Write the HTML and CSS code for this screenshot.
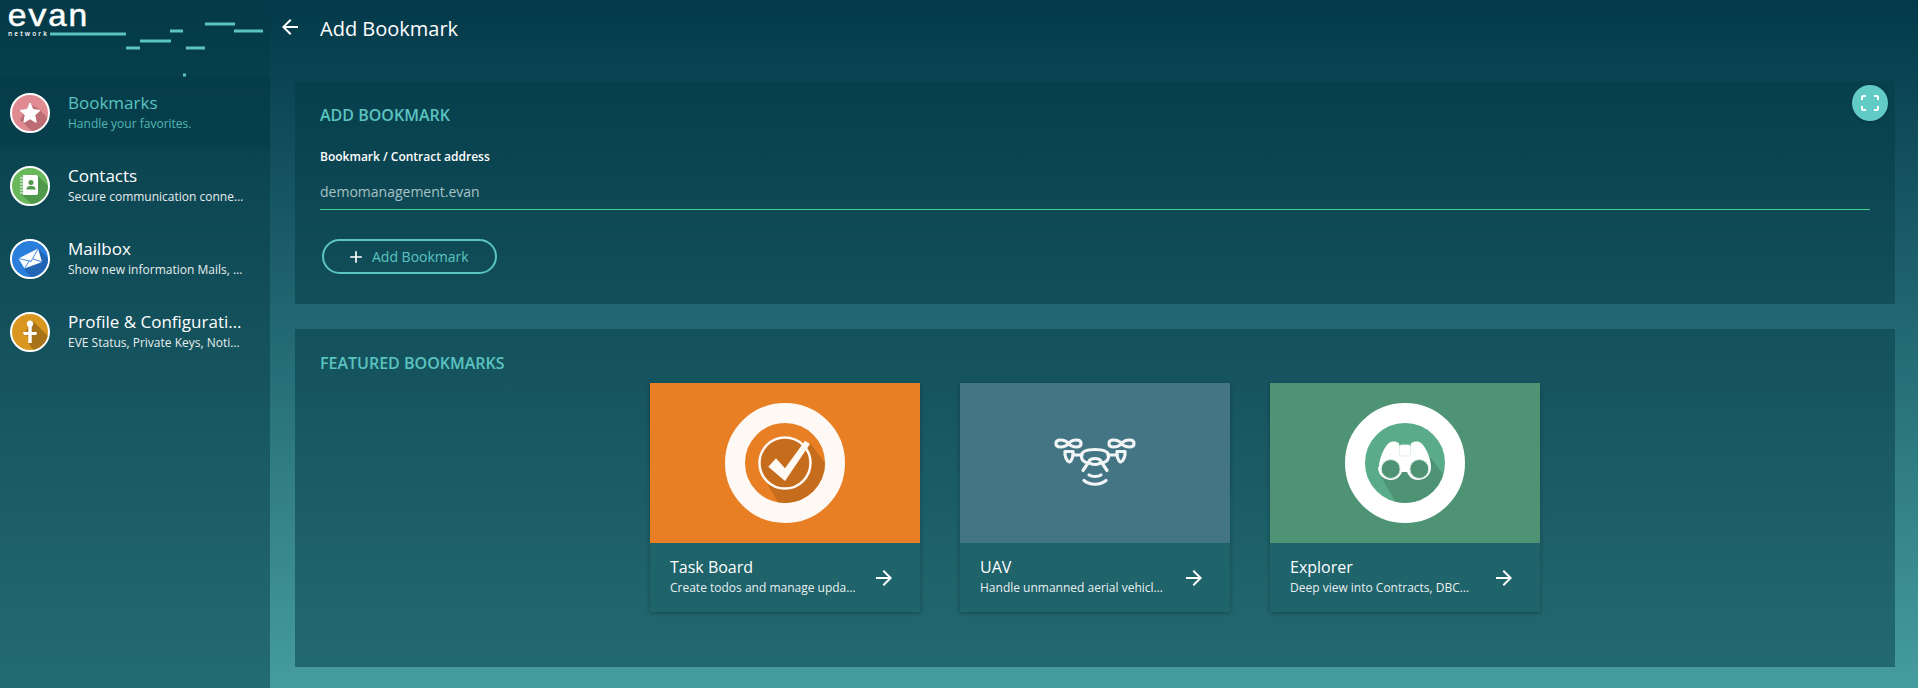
FILE: index.html
```html
<!DOCTYPE html>
<html lang="en">
<head>
<meta charset="utf-8">
<title>Add Bookmark</title>
<link rel="stylesheet" href="styles.css">
</head>
<body>
<div class="app">
  <aside class="sidebar">
    <svg class="logo" width="270" height="76" viewBox="0 0 270 76">
      <text class="logo-word" x="7" y="26" textLength="81" lengthAdjust="spacingAndGlyphs">evan</text>
      <text class="logo-sub" x="8" y="36" textLength="39">network</text>
      <g class="logo-dash">
        <rect x="50" y="32.500" width="76" height="3"/>
        <rect x="126" y="46.500" width="14" height="3"/>
        <rect x="140" y="39.500" width="31" height="3"/>
        <rect x="170" y="29.500" width="13" height="3"/>
        <rect x="186" y="46.500" width="19" height="3"/>
        <rect x="205" y="22.500" width="30" height="3"/>
        <rect x="234" y="29.500" width="29" height="3"/>
        <rect x="183" y="73.500" width="3" height="3.500"/>
      </g>
    </svg>
    <nav class="nav">
      <a class="nav-item active">
        <svg class="nav-icon" viewBox="-20 -20 40 40">
          <circle r="19" fill="#e08a92" stroke="#fff" stroke-width="2"/>
          <clipPath id="c1"><circle r="18"/></clipPath>
          <path clip-path="url(#c1)" d="M-1-9L9-4 24 12 8 24-10 7z" fill="#bd6d74"/>
          <path d="M0-10l3 6.600 7 .8-5.200 4.800 1.400 7.200L0 5.800-6.200 9.400l1.400-7.200L-10-2.600l7-.8z" fill="#fff" stroke="#fff" stroke-width="1" stroke-linejoin="round"/>
        </svg>
        <span class="nav-text"><span class="nav-title">Bookmarks</span><span class="nav-sub">Handle your favorites.</span></span>
      </a>
      <a class="nav-item">
        <svg class="nav-icon" viewBox="-20 -20 40 40">
          <circle r="19" fill="#69b95c" stroke="#fff" stroke-width="2"/>
          <clipPath id="c2"><circle r="18"/></clipPath>
          <path clip-path="url(#c2)" d="M8-10L24 6 8 24-8 9z" fill="#4f9a4a"/>
          <path d="M-7-11H6a2 2 0 0 1 2 2V7a2 2 0 0 1-2 2H-7z" fill="#fff"/>
          <path d="M-10-8h4M-10-5h4M-10-2h4M-10 1h4M-10 4h4M-10 7h4" stroke="#fff" stroke-width="1"/>
          <circle cx="1" cy="-3.500" r="2.500" fill="#4f9a4a"/>
          <path d="M-3.500 3.500c0-3 2-3.500 4.500-3.500s4.500.5 4.500 3.500z" fill="#4f9a4a"/>
        </svg>
        <span class="nav-text"><span class="nav-title">Contacts</span><span class="nav-sub">Secure communication connections</span></span>
      </a>
      <a class="nav-item">
        <svg class="nav-icon" viewBox="-20 -20 40 40">
          <circle r="19" fill="#2a7fdc" stroke="#fff" stroke-width="2"/>
          <clipPath id="c3"><circle r="18"/></clipPath>
          <path clip-path="url(#c3)" d="M8-11L24 6 6 24-6 10z" fill="#2265b5"/>
          <path d="M-11.500-.5L8-10.500l4 13.500L-5.500 9.500z" fill="#fff"/>
          <path d="M-11-.5L1 2.500 8-10M-5.500 9.500L-.5 1.500M12 3L3 0" fill="none" stroke="#2a7fdc" stroke-width=".9"/>
        </svg>
        <span class="nav-text"><span class="nav-title">Mailbox</span><span class="nav-sub">Show new information Mails, Notifications</span></span>
      </a>
      <a class="nav-item">
        <svg class="nav-icon" viewBox="-20 -20 40 40">
          <circle r="19" fill="#da971f" stroke="#fff" stroke-width="2"/>
          <clipPath id="c4"><circle r="18"/></clipPath>
          <path clip-path="url(#c4)" d="M3-11L24 10 8 24-1 12 2 4-7 3z" fill="#a87318"/>
          <path d="M0-11.500c2 0 3.200 1.500 3.200 3.200 0 1.400-.9 2.400-1.500 3.200V0H7l-.8 3H1.700v8h-3.400V3H-6.200L-7 0h5.300v-5.100c-.6-.8-1.500-1.800-1.500-3.200C-3.200-10-2-11.500 0-11.500z" fill="#fff"/>
        </svg>
        <span class="nav-text"><span class="nav-title">Profile &amp; Configuration</span><span class="nav-sub">EVE Status, Private Keys, Notifications</span></span>
      </a>
    </nav>
  </aside>
  <main class="main">
    <header class="topbar">
      <svg class="back" width="24" height="24" viewBox="0 0 24 24"><path d="M20 11H7.830l5.590-5.590L12 4l-8 8 8 8 1.410-1.410L7.830 13H20z"/></svg>
      <h1 class="page-title">Add Bookmark</h1>
    </header>
    <div class="content">
      <section class="card card-form">
        <button class="fab" type="button" aria-label="Fullscreen">
          <svg width="18" height="16" viewBox="0 0 18 16"><path d="M1 5V2.500A1.500 1.500 0 0 1 2.500 1H5M13 1h2.500A1.500 1.500 0 0 1 17 2.500V5M17 11v2.500a1.500 1.500 0 0 1-1.500 1.500H13M5 15H2.500A1.500 1.500 0 0 1 1 13.500V11"/></svg>
        </button>
        <h2 class="card-title">ADD BOOKMARK</h2>
        <label class="field-label" for="addr">Bookmark / Contract address</label>
        <input class="field-input" id="addr" type="text" value="demomanagement.evan">
        <button class="btn" type="button">
          <svg width="20" height="20" viewBox="0 0 24 24"><path d="M19 13h-6v6h-2v-6H5v-2h6V5h2v6h6v2z"/></svg>
          <span>Add Bookmark</span>
        </button>
      </section>
      <section class="card card-featured">
        <h2 class="card-title">FEATURED BOOKMARKS</h2>
        <div class="tiles">
          <article class="tile">
            <svg class="tile-art art-orange" viewBox="0 0 270 160">
              <circle cx="135" cy="80" r="50" fill="none" stroke="#fff9f5" stroke-width="20"/>
              <clipPath id="t1"><circle cx="135" cy="80" r="40"/></clipPath>
              <path clip-path="url(#t1)" d="M160 60l30 40-40 40-13-5-19-33 20-30z" fill="#c56d1d"/>
              <circle cx="135" cy="80" r="25.500" fill="#c56d1d" stroke="#fff9f5" stroke-width="2.500"/>
              <path d="M118.300 83.700l7.700-8.400 9 10L155 57.700l5 3.300L135 98z" fill="#fff9f5"/>
            </svg>
            <div class="tile-body">
              <div class="tile-text"><span class="tile-title">Task Board</span><span class="tile-sub">Create todos and manage updates</span></div>
              <svg class="tile-arrow" width="24" height="24" viewBox="0 0 24 24"><path d="M12 4l-1.410 1.410L16.170 11H4v2h12.170l-5.580 5.590L12 20l8-8z"/></svg>
            </div>
          </article>
          <article class="tile">
            <svg class="tile-art art-blue" viewBox="0 0 270 160">
              <g fill="none" stroke="#f2f5f5" stroke-width="3.200" stroke-linecap="round" stroke-linejoin="round">
                <path d="M108.500 60.500c-2.500-3-5-3.500-8-3.500s-4.500 1.500-4.500 3.500 1.500 3.500 4.500 3.500 5.500-.5 8-3.500c2.500-3 5-3.500 8-3.500s4.500 1.500 4.500 3.500-1.500 3.500-4.500 3.500-5.500-.5-8-3.500z"/>
                <path d="M161.500 60.500c-2.500-3-5-3.500-8-3.500s-4.500 1.500-4.500 3.500 1.500 3.500 4.500 3.500 5.500-.5 8-3.500c2.500-3 5-3.500 8-3.500s4.500 1.500 4.500 3.500-1.500 3.500-4.500 3.500-5.500-.5-8-3.500z"/>
                <path d="M105 68.500h8c.5 4-1 9.500-3.500 10.500-3-1-5-6-4.500-10.500z"/>
                <path d="M157 68.500h8c.5 4.500-1.500 9.500-4.500 10.500-2.500-1-4-6.500-3.500-10.500z"/>
                <path d="M113 72h9M148 72h9"/>
                <path d="M128 80c-5-1-7-4-6.500-8 .6-3.500 5-5.500 13.500-5.500s12.900 2 13.500 5.500c.5 4-1.500 7-6.500 8"/>
                <path d="M123 87.500l5-7.500M147 87.500l-5-7.500"/>
                <ellipse cx="135" cy="78.500" rx="6" ry="3"/>
                <path d="M129 92c3 2 9 2 12 0M124 97.500c6 5 16 5 22 0"/>
              </g>
            </svg>
            <div class="tile-body">
              <div class="tile-text"><span class="tile-title">UAV</span><span class="tile-sub">Handle unmanned aerial vehicles and drones</span></div>
              <svg class="tile-arrow" width="24" height="24" viewBox="0 0 24 24"><path d="M12 4l-1.410 1.410L16.170 11H4v2h12.170l-5.580 5.590L12 20l8-8z"/></svg>
            </div>
          </article>
          <article class="tile">
            <svg class="tile-art art-green" viewBox="0 0 270 160">
              <circle cx="135" cy="80" r="50" fill="#5aab89" stroke="#fff" stroke-width="20"/>
              <clipPath id="t3"><circle cx="135" cy="80" r="40"/></clipPath>
              <path clip-path="url(#t3)" d="M161 75l30 40-40 40-11-11-30-52z" fill="#4f9375"/>
              <path d="M109 84c0-8 5-20 10-24 3-2 7-2 10 .5l1 5h10l1-5c3-2.500 7-2.500 10-.5 5 4 10 16 10 24 0 8-6 13-13 13-5 0-9-3-11-8h-5c-2 5-6 8-11 8-7 0-13-5-13-13z" fill="#fff"/>
              <rect x="129.500" y="62" width="11" height="11" rx="2" fill="#fff" stroke="#dfeee8" stroke-width="1"/>
              <circle cx="120.700" cy="86" r="9.500" fill="#4f9375" stroke="#dfeee8" stroke-width="1"/>
              <circle cx="149.300" cy="86" r="9.500" fill="#4f9375" stroke="#dfeee8" stroke-width="1"/>
            </svg>
            <div class="tile-body">
              <div class="tile-text"><span class="tile-title">Explorer</span><span class="tile-sub">Deep view into Contracts, DBCPs and more</span></div>
              <svg class="tile-arrow" width="24" height="24" viewBox="0 0 24 24"><path d="M12 4l-1.410 1.410L16.170 11H4v2h12.170l-5.580 5.590L12 20l8-8z"/></svg>
            </div>
          </article>
        </div>
      </section>
    </div>
  </main>
</div>
</body>
</html>
```
FILE: styles.css
```css
* { box-sizing: border-box; }
html, body { margin: 0; height: 100%; }
body {
  height: 688px;
  overflow: hidden;
  font-family: "Open Sans", "Noto Sans", sans-serif;
  color: #fff;
  background: linear-gradient(180deg, #03394a 0%, #459c9e 100%);
}
.app { display: flex; height: 688px; }

/* Sidebar */
.sidebar { width: 270px; flex: none; background: rgba(3, 57, 70, .5); }
.logo { display: block; overflow: visible; }
.logo-word { font-family: "Liberation Mono", monospace; font-size: 32px; font-weight: 400; fill: #fff; stroke: #fff; stroke-width: .5px; }
.logo-sub { font-family: "Open Sans", sans-serif; font-size: 6.500px; font-weight: 600; fill: #fff; }
.logo-dash { fill: #5bc4c0; }
.nav { display: flex; flex-direction: column; }
.nav-item { display: flex; align-items: center; height: 73px; padding-left: 10px; gap: 18px; }
.nav-item.active { background: rgba(3, 57, 70, .5); color: #5bc4c0; }
.nav-icon { width: 40px; height: 40px; flex: none; }
.nav-text { display: flex; flex-direction: column; width: 176px; min-width: 0; padding-bottom: 3px; }
.nav-title, .nav-sub, .tile-title, .tile-sub { display: block; white-space: nowrap; overflow: hidden; text-overflow: ellipsis; }
.nav-title { font-size: 17px; line-height: 23px; margin-bottom: 1px; }
.nav-sub { font-size: 12px; line-height: 17px; opacity: .9; }

/* Main */
.main { flex: 1; min-width: 0; display: flex; flex-direction: column; }
.topbar { height: 57px; flex: none; display: flex; align-items: center; padding-left: 8px; gap: 18px; }
.back { fill: #fff; margin-top: -3px; }
.page-title { margin: 0; font-size: 20px; font-weight: 400; line-height: 27px; }
.content { flex: 1; display: flex; flex-direction: column; gap: 25px; padding: 24px 23px 21px 25px; }
.card { position: relative; padding: 23px 25px 0; background: rgba(3, 57, 70, .5); }
.card-form { height: 223px; }
.card-featured { height: 338px; }
.card-title { margin: 0; font-size: 16px; font-weight: 600; line-height: 22px; color: #5bc4c0; }

.fab {
  position: absolute; top: 4px; right: 7px;
  width: 36px; height: 36px; padding: 0;
  display: flex; align-items: center; justify-content: center;
  border: 0; border-radius: 50%;
  background: #63cbc6;
  box-shadow: 0 1px 3px rgba(0, 0, 0, .25);
}
.fab svg { fill: none; stroke: #fff; stroke-width: 2; }

.field-label { display: block; margin-top: 23px; font-size: 12px; font-weight: 600; line-height: 16px; }
.field-input {
  display: block; width: 100%; height: 35px; margin-top: 10px; padding: 0 0 2px;
  font: 400 14px "Open Sans", sans-serif;
  color: #a8c2c6;
  background: transparent; border: 0; border-bottom: 1px solid #43d08a; outline: 0;
}
.btn {
  display: flex; align-items: center; gap: 6px;
  width: 175px; height: 35px; margin: 29px 0 0 2px; padding: 0 0 0 22px;
  font: 400 14px "Open Sans", sans-serif;
  color: #5bc4c0;
  background: transparent; border: 2px solid #5bc4c0; border-radius: 18px;
}
.btn svg { fill: #fff; flex: none; }

/* Tiles */
.tiles { display: flex; justify-content: center; gap: 40px; margin-top: 9px; }
.tile { width: 270px; height: 229px; background: #1f636b; box-shadow: 0 1px 4px rgba(0, 0, 0, .3); }
.tile-art { display: block; width: 270px; height: 160px; }
.art-orange { background: #e87f24; }
.art-blue { background: #437585; }
.art-green { background: #4f9375; }
.tile-body { display: flex; align-items: center; height: 69px; padding: 0 24px 0 20px; }
.tile-text { flex: 1; min-width: 0; padding-bottom: 3px; }
.tile-title { font-size: 16px; line-height: 22px; margin-bottom: 1px; }
.tile-sub { font-size: 12px; line-height: 17px; opacity: .9; width: 186px; }
.tile-arrow { fill: #fff; flex: none; }
```
